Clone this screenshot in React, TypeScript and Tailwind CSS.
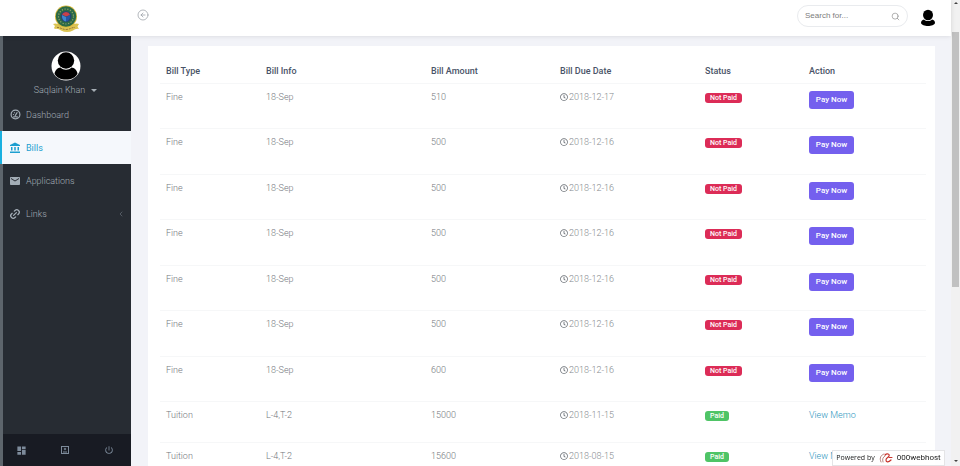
import React from "react";
import {
  MdAccountBalance,
  MdDashboard,
  MdEmail,
  MdPowerSettingsNew,
} from "react-icons/md";
import { FaRegClock } from "react-icons/fa";
import { ChevronLeft, CircleArrowLeft, Link2, Search } from "lucide-react";

type Bill = {
  type: string;
  info: string;
  amount: string;
  due: string;
  paid: boolean;
  height: string;
};

const bills: Bill[] = [
  { type: "Fine", info: "18-Sep", amount: "510", due: "2018-12-17", paid: false, height: "h-[45px]" },
  { type: "Fine", info: "18-Sep", amount: "500", due: "2018-12-16", paid: false, height: "h-[46px]" },
  { type: "Fine", info: "18-Sep", amount: "500", due: "2018-12-16", paid: false, height: "h-[45px]" },
  { type: "Fine", info: "18-Sep", amount: "500", due: "2018-12-16", paid: false, height: "h-[46px]" },
  { type: "Fine", info: "18-Sep", amount: "500", due: "2018-12-16", paid: false, height: "h-[45px]" },
  { type: "Fine", info: "18-Sep", amount: "500", due: "2018-12-16", paid: false, height: "h-[46px]" },
  { type: "Fine", info: "18-Sep", amount: "600", due: "2018-12-16", paid: false, height: "h-[45px]" },
  { type: "Tuition", info: "L-4,T-2", amount: "15000", due: "2018-11-15", paid: true, height: "h-[41px]" },
  { type: "Tuition", info: "L-4,T-2", amount: "15600", due: "2018-08-15", paid: true, height: "h-[41px]" },
];

function Crest() {
  return (
    <svg viewBox="0 0 28 28" className="h-7 w-7" aria-label="University crest">
      <path d="M1 20l2.500-.5c2 .5 3 0 5 1 4 2 7 2 11 0 2-1 3-.5 5-1l2.500.5-1.500 2.500 1.500 2.500c-3-.5-4 .5-6 1.500-4 2-8 2-12 0-2-1-3-2-6-1.500l-1-1 1-2z" fill="#dcc453" />
      <circle cx="14" cy="12.500" r="11" fill="#d9b93a" />
      <circle cx="14" cy="12.500" r="10.200" fill="#2c6a45" />
      <circle cx="14" cy="12.500" r="7.500" fill="none" stroke="#93a06a" strokeWidth="1.200" strokeDasharray="1.200 1.600" />
      <circle cx="14" cy="12.500" r="5.500" fill="#27466f" />
      <path d="M14 8a4.500 4.500 0 0 1 4 3l-4 1.500-4-2A4.500 4.500 0 0 1 14 8z" fill="#c9404a" />
      <path d="M10 11l4 2v4.500c-2.500 0-4.500-3-4-6.500z" fill="#3d86cf" />
      <path d="M18 11l-4 2v4.500c2.500 0 4.500-3 4-6.500z" fill="#2456a6" />
      <path d="M5 23.500c3-.5 5 2 9 2s6-2.500 9-2" fill="none" stroke="#9a7a35" strokeWidth="1" strokeDasharray="2 1" />
    </svg>
  );
}

function SidebarAvatar() {
  return (
    <svg viewBox="0 0 30 30" className="h-[30px] w-[30px]" aria-hidden="true">
      <circle cx="15" cy="15" r="14.500" fill="#fff" />
      <circle cx="15" cy="9.500" r="8.200" fill="#000" />
      <path d="M3.500 22.500c1-4 3-5.500 6-6 3 3 8 3 11 0 3 .5 5 2 6 6-2 4-6 6-11.500 6s-9.500-2-11.500-6z" fill="#000" />
    </svg>
  );
}

function GaugeIcon() {
  return (
    <svg viewBox="0 0 12 12" className="h-[11px] w-[11px] shrink-0" fill="none" stroke="currentColor" aria-hidden="true">
      <circle cx="6" cy="6" r="4.800" strokeWidth="1.300" />
      <path d="M3.500 9c1-1 4-1 5 0M5.500 7.500L8 3.500M3.200 6h1M4.500 3.800l.6.6" strokeWidth="1.300" />
    </svg>
  );
}

function NavItem({ icon, label, active = false, trailing }: {
  icon: React.ReactNode;
  label: string;
  active?: boolean;
  trailing?: React.ReactNode;
}) {
  return (
    <li>
      <a
        href="#"
        className={
          active
            ? "flex h-[33px] items-center gap-1.5 border-l-2 border-[#1ab0e0] bg-[#f5f8fc] pl-2 pr-2 font-normal text-[#1c9fd0]"
            : "ml-[3px] mr-px flex h-[33px] items-center gap-1.5 pl-[7px] pr-[5px] font-light text-[#a3adb6]"
        }
      >
        <span className="flex w-2.5 justify-center">{icon}</span>
        <span className="flex-1">{label}</span>
        {trailing}
      </a>
    </li>
  );
}

function Sidebar() {
  return (
    <aside className="flex w-[131px] shrink-0 flex-col bg-[linear-gradient(to_right,#5d656c_3px,#272c33_3px)]">
      <div className="flex flex-col items-center pt-[15px]">
        <SidebarAvatar />
        <button className="mt-[3px] flex items-center gap-1.5 text-[9px] font-light leading-3 text-[#a3adb6]">
          Saqlain Khan
          <span className="border-x-[3px] border-t-[3px] border-x-transparent border-t-[#a5adb4]" />
        </button>
      </div>
      <nav className="pt-0.5 text-[9px] leading-3" aria-label="Main">
        <ul>
          <NavItem icon={<GaugeIcon />} label="Dashboard" />
          <NavItem icon={<MdAccountBalance size={12} className="shrink-0" />} label="Bills" active />
          <NavItem icon={<MdEmail size={12} className="shrink-0" />} label="Applications" />
          <NavItem
            icon={<Link2 size={12} strokeWidth={2.500} className="shrink-0 -rotate-45" />}
            label="Links"
            trailing={<ChevronLeft size={8} className="text-[#69727b]" />}
          />
        </ul>
      </nav>
      <div className="mt-auto grid h-8 grid-cols-3 place-items-center bg-[linear-gradient(to_right,#5d656c_3px,#181b23_3px)] text-[#7d8b9b]">
        <button aria-label="Dashboard"><MdDashboard size={11} /></button>
        <button aria-label="Profile">
          <svg viewBox="0 0 10 10" className="h-2.5 w-2.5" fill="none" stroke="currentColor">
            <rect x="1.500" y="1.500" width="7" height="7" />
            <circle cx="5" cy="4" r=".8" />
            <path d="M3 7h4" />
          </svg>
        </button>
        <button aria-label="Sign out"><MdPowerSettingsNew size={10} /></button>
      </div>
    </aside>
  );
}

function Header() {
  return (
    <header className="relative z-10 flex h-9 shrink-0 items-center bg-white shadow-[0_0_5px_rgba(0,0,0,0.12)]">
      <div className="flex w-[131px] justify-center">
        <Crest />
      </div>
      <button aria-label="Collapse menu" className="-mt-1.5 ml-1.5 text-[#9a9fa5]">
        <CircleArrowLeft size={12} strokeWidth={1.500} />
      </button>
      <form className="-mt-1 ml-auto mr-3 flex h-[22px] w-[111px] items-center rounded-full border border-[#e9ebee] px-[7px]">
        <input
          aria-label="Search"
          placeholder="Search for..."
          className="min-w-0 flex-1 font-['Liberation_Sans',sans-serif] text-[8px] outline-none placeholder:text-[#7c7c7c]"
        />
        <Search size={9} strokeWidth={1.500} className="text-[#777]" />
      </form>
      <button aria-label="Account" className="mr-[15px]">
        <svg viewBox="0 0 16 18" className="h-[18px] w-4">
          <ellipse cx="8" cy="6" rx="5" ry="5.200" />
          <path d="M1 14c0-2 1-3 3-3.500 2 2 6 2 8 0 2 .5 3 1.500 3 3.500-1 4-13 4-14 0z" />
        </svg>
      </button>
    </header>
  );
}

function BillsTable() {
  return (
    <table className="w-full table-fixed text-left text-[9px] leading-3 text-[#73777c]">
      <colgroup>
        <col className="w-[100px]" />
        <col className="w-[165px]" />
        <col className="w-[129px]" />
        <col className="w-[145px]" />
        <col className="w-[104px]" />
        <col className="w-[123px]" />
      </colgroup>
      <thead>
        <tr className="h-[25px] text-[#4a5468]">
          {["Bill Type", "Bill Info", "Bill Amount", "Bill Due Date", "Status", "Action"].map((h) => (
            <th key={h} className="px-1.5 pt-0.5 font-medium">{h}</th>
          ))}
        </tr>
      </thead>
      <tbody>
        {bills.map((bill, i) => (
          <tr key={i} className={`${bill.height} border-t border-[#f6f7f8] align-top font-light`}>
            <td className="px-1.5 pt-[7px]">{bill.type}</td>
            <td className="px-1.5 pt-[7px]">{bill.info}</td>
            <td className="px-1.5 pt-[7px]">{bill.amount}</td>
            <td className="px-1.5 pt-[7px]">
              <span className="flex items-center gap-px text-[#85898e]">
                <FaRegClock size={8} className="text-[#6c7177]" />
                {bill.due}
              </span>
            </td>
            <td className="px-1.5 pt-[9px]">
              <span
                className={
                  bill.paid
                    ? "block w-fit rounded-[3px] bg-[#4fc466] px-[5px] text-[7px] font-medium leading-[10px] text-white"
                    : "block w-fit rounded-[3px] bg-[#dc2c57] px-[5px] text-[7px] font-medium leading-[10px] text-white"
                }
              >
                {bill.paid ? "Paid" : "Not Paid"}
              </span>
            </td>
            <td className="px-1.5 pt-[7px]">
              {bill.paid ? (
                <a href="#" className="text-[#2b95bd]">View Memo</a>
              ) : (
                <button className="block h-[18px] w-[45px] rounded-[3px] bg-[#7460ee] text-[8px] font-medium leading-3 text-white">
                  Pay Now
                </button>
              )}
            </td>
          </tr>
        ))}
      </tbody>
    </table>
  );
}

export default function App() {
  return (
    <div className="flex h-screen overflow-hidden bg-[#f2f3f8] font-['Roboto',sans-serif]">
      <div className="flex min-w-0 flex-1 flex-col">
        <Header />
        <div className="flex min-h-0 flex-1">
          <Sidebar />
          <main className="min-w-0 flex-1 overflow-hidden pl-[17px] pr-4 pt-2.5">
            <section className="bg-white pb-6 pl-3 pr-[9px] pt-3">
              <BillsTable />
            </section>
          </main>
        </div>
      </div>
      <div className="flex w-[9px] shrink-0 flex-col items-center bg-[#f1f1f1]" aria-hidden="true">
        <span className="mt-0.5 border-x-2 border-b-2 border-x-transparent border-b-[#444]" />
        <span className="mt-7 h-[255px] w-[7px] bg-[#c1c1c1]" />
        <span className="mb-1 mt-auto border-x-2 border-t-2 border-x-transparent border-t-[#444]" />
      </div>
      <a
        href="#"
        className="fixed bottom-0 right-[15px] z-20 flex h-4 w-[113px] items-center justify-center gap-1 border border-[#e4e4e6] bg-white/90 text-[8px] text-[#222]"
      >
        <span className="font-['Open_Sans',sans-serif] text-[7px]">Powered by</span>
        <svg viewBox="0 0 14 12" className="h-3 w-3.5" fill="none" strokeLinecap="round">
          <path d="M2 10C0 6 2 3 5 2M4 10C3 7 4 5 6 4" stroke="#b9857f" />
          <path d="M6 3c2-2 5-1 4 1s-3 2-3 4 2 3 5 0" stroke="#c8322b" strokeWidth="1.200" />
          <path d="M10 5.500h3" stroke="#c8322b" />
        </svg>
        <span>000webhost</span>
      </a>
    </div>
  );
}
